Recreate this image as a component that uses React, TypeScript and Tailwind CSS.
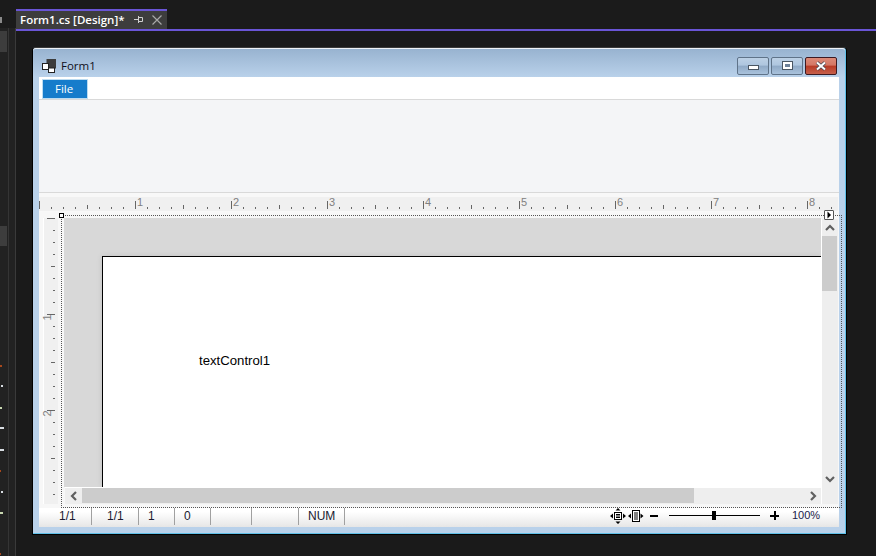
import React from "react";

const ticks = Array.from({ length: 67 }, (_, i) => i);

function HRuler() {
  return (
    <svg width="799" height="14" className="block">
      <g shapeRendering="crispEdges">
        {ticks.map((i) => {
          const x = i * 12 + 0.5;
          const top = i % 8 === 0 ? 4 : i % 4 === 0 ? 8 : 10;
          return <line key={i} x1={x} x2={x} y1={top} y2={12} stroke="#666" strokeWidth="1" />;
        })}
      </g>
      {[1, 2, 3, 4, 5, 6, 7, 8].map((n) => (
        <text key={n} x={n * 96 + 2} y="8.5" fontSize="11" fontFamily="'Liberation Sans', sans-serif" fill="#808080">
          {n}
        </text>
      ))}
    </svg>
  );
}

function VRuler() {
  const vt = Array.from({ length: 24 }, (_, i) => i);
  return (
    <svg width="13" height="286" className="block" shapeRendering="crispEdges">
      {vt.map((i) => {
        const y = i * 12 + 0.5;
        const len = i % 8 === 0 ? 8 : i % 4 === 0 ? 4 : 2;
        return <line key={i} x1={11 - len} x2={11} y1={y} y2={y} stroke="#666" strokeWidth="1" />;
      })}
    </svg>
  );
}

function Chevron({ d }: { d: string }) {
  return (
    <svg width="10" height="10" viewBox="0 0 10 10" className="block">
      <path d={d} fill="none" stroke="#606060" strokeWidth="2.2" />
    </svg>
  );
}

function WinButton({ kind }: { kind: "min" | "max" | "close" }) {
  const isClose = kind === "close";
  return (
    <div
      className={
        isClose
          ? "relative w-[32px] h-[18px] rounded-[2px] border border-[#3c1a22] flex items-center justify-center bg-[linear-gradient(#dc8a78_0%,#d47765_45%,#b83a25_50%,#c6604c_100%)]"
          : "relative w-[32px] h-[18px] rounded-[2px] border border-[#5f7389] flex items-center justify-center bg-[linear-gradient(#bcd0e5_0%,#aec6df_45%,#8fa9c6_50%,#a9c2dc_100%)]"
      }
    >
      {kind === "min" && <div className="w-[11px] h-[5px] mt-[3px] bg-white border border-[#4a5663]" />}
      {kind === "max" && (
        <div className="w-[11px] h-[9px] bg-white border border-[#4a5663] flex items-center justify-center">
          <div className="w-[5px] h-[3px] bg-[#6d8199]" />
        </div>
      )}
      {kind === "close" && (
        <svg width="12" height="10" viewBox="0 0 12 10">
          <path d="M2 1.5 L10 8.5 M10 1.5 L2 8.5" stroke="#4a4a55" strokeWidth="3.6" />
          <path d="M2 1.5 L10 8.5 M10 1.5 L2 8.5" stroke="#ffffff" strokeWidth="2" />
        </svg>
      )}
    </div>
  );
}

const cells: [number, string, string][] = [
  [53, "pl-[20px]", "1/1"],
  [47, "pl-[15px]", "1/1"],
  [36, "pl-[9px]", "1"],
  [36, "pl-[9px]", "0"],
  [41, "", ""],
  [47, "", ""],
  [46, "pl-[9px]", "NUM"],
];

const dots: [number, number, number, string][] = [
  [365, 0, 2, "bg-[#a8481c]"],
  [385, 1, 2, "bg-[#d8dde2]"],
  [407, 0, 2, "bg-[#c8d8b0]"],
  [427, 0, 4, "bg-[#d8dde2]"],
  [449, 0, 4, "bg-[#d8dde2]"],
  [470, 0, 1, "bg-[#a8481c]"],
  [491, 1, 2, "bg-[#d8dde2]"],
  [512, 0, 3, "bg-[#c8d8b0]"],
  [553, 0, 1, "bg-[#a8481c]"],
];

export default function App() {
  return (
    <div className="relative w-[876px] h-[556px] overflow-hidden bg-[#1b1b1b] flex font-['Open_Sans',sans-serif]">
      {/* left strip */}
      <div className="w-[16px] h-full flex-none flex flex-col">
        <div className="h-[28px] flex-none relative">
          <div className="absolute left-0 top-[17px] w-[2px] h-[6px] bg-[#8a8a8a]" />
        </div>
        <div className="relative flex-1 bg-[#222222] border-r border-[#3a3a3a]">
          <div className="absolute left-[8px] top-0 bottom-0 w-px bg-[#353535]" />
          <div className="absolute left-0 top-[3px] w-[7px] h-[21px] bg-[#3d3d3d]" />
          <div className="absolute left-0 top-[198px] w-[7px] h-[20px] bg-[#3d3d3d]" />
          {dots.map(([y, x, w, c]) => (
            <div key={y} style={{ top: y - 28, left: x, width: w }} className={`absolute h-[2px] ${c}`} />
          ))}
        </div>
      </div>

      <div className="flex-1 flex flex-col min-w-0">
        {/* tab bar */}
        <div className="h-[31px] flex-none pt-[9px] bg-[#1b1b1b] border-b-2 border-[#6a55d6]">
          <div className="w-[151px] h-[20px] bg-[#3d3d3d] border-t-2 border-[#6a55d6] flex items-center pl-[4px] text-white">
            <span className="w-[104px] flex-none text-[11.5px] font-semibold leading-none whitespace-nowrap">Form1.cs [Design]*</span>
            <svg width="10" height="10" viewBox="0 0 10 10" className="ml-[10px] flex-none">
              <path d="M0 4.5 H4 M4.5 1 V8 M4.5 2.5 H8.5 V6.5 H4.5" fill="none" stroke="#d0d0d0" strokeWidth="1" />
            </svg>
            <svg width="10" height="10" viewBox="0 0 10 10" className="ml-[8px] flex-none">
              <path d="M0.5 0.5 L9.5 9.5 M9.5 0.5 L0.5 9.5" stroke="#a8a8a8" strokeWidth="1.2" />
            </svg>
          </div>
        </div>

        {/* design surface */}
        <div className="flex-1 bg-[#1a1a1a] pt-[16px] pl-[16px]">
          {/* window */}
          <div className="w-[815px] h-[488px] rounded-t-[4px] border border-black border-t-[#3a3a3a]">
            <div className="h-full bg-[#b9d1ea] flex flex-col border-r border-b border-[#5fc0e8] rounded-t-[3px]">
              <div className="h-[29px] flex-none rounded-t-[3px] border-t border-[#eef2f7] bg-[linear-gradient(#98b3d0,#b9d1ea)] pt-[5px] flex items-center pl-[9px] pr-[8px]">
                <svg width="14" height="14" viewBox="0 0 14 14" className="flex-none">
                  <rect x="5" y="0.5" width="8.5" height="8.5" fill="#3c3c3c" stroke="#3c3c3c" />
                  <rect x="0.5" y="4.5" width="6" height="6" fill="#ffffff" stroke="#222" />
                  <rect x="6.5" y="9" width="6" height="4.5" fill="#ffffff" stroke="#222" />
                </svg>
                <span className="ml-[5px] text-[11.5px] leading-none text-[#101020]">Form1</span>
                <div className="ml-auto flex gap-[2px]">
                  <WinButton kind="min" />
                  <WinButton kind="max" />
                  <WinButton kind="close" />
                </div>
              </div>

              <div className="flex-1 mx-[6px] mb-[6px] flex flex-col bg-[#f0f0f0] min-h-0">
                {/* menu */}
                <div className="h-[23px] flex-none bg-white border-b border-[#d9d9d9] pl-[3px] pt-[2px]">
                  <div className="w-[46px] h-[20px] bg-[#167ccb] border border-[#bcdcf2] text-white text-[11.5px] leading-[18px] pl-[12px]">File</div>
                </div>
                {/* toolbar */}
                <div className="h-[93px] flex-none bg-[#f4f5f7] border-b border-[#d9d9d9]" />
                {/* h ruler */}
                <div className="h-[19px] flex-none bg-[#f8f8f8] pt-[4px]">
                  <div className="h-[14px] mr-[1px] bg-[#f0f0f0]">
                    <HRuler />
                  </div>
                </div>

                {/* designer body */}
                <div className="relative flex-1 min-h-0 bg-white flex flex-col">
                  {/* selection frame */}
                  <div className="absolute left-[22px] top-[3px] w-[781px] h-[293px] border border-dotted border-[#555555] z-10 pointer-events-none" />
                  <div className="absolute left-[20px] top-[1px] w-[3px] h-[3px] bg-white border border-black z-20 box-content" />
                  <div className="absolute left-[785px] top-[-2px] w-[8px] h-[8px] bg-white border border-[#555555] rounded-[1px] z-20 box-content flex items-center justify-center">
                    <svg width="6" height="8" viewBox="0 0 6 8" className="block">
                      <path d="M1.5 0.5 L5 4 L1.5 7.5 Z" fill="#000" />
                    </svg>
                  </div>

                  <div className="h-[296px] flex-none flex bg-[#f7f7f7] pt-[6px] pb-[4px]">
                    {/* v ruler */}
                    <div className="w-[15px] ml-[4px] flex-none bg-[#f0f0f0] border-l border-white">
                      <div className="relative h-[286px]">
                        <VRuler />
                        <span className="absolute left-[0px] top-[94px] text-[11px] leading-none text-[#808080] rotate-[-90deg] font-['Liberation_Sans',sans-serif]">1</span>
                        <span className="absolute left-[0px] top-[190px] text-[11px] leading-none text-[#808080] rotate-[-90deg] font-['Liberation_Sans',sans-serif]">2</span>
                      </div>
                    </div>

                    <div className="flex-1 ml-[6px] mr-[1px] flex min-w-0">
                      <div className="flex-1 flex flex-col min-w-0">
                        {/* page canvas */}
                        <div className="flex-1 min-h-0 bg-[#d8d8d8] pl-[38px] pt-[38px]">
                          <div className="h-full bg-white border-t border-l border-black pl-[96px] pt-[90px] shadow-[0_0_6px_rgba(0,0,0,0.1)]">
                            <span className="text-[13.2px] leading-none text-black font-['Liberation_Sans',sans-serif]">textControl1</span>
                          </div>
                        </div>
                        {/* h scrollbar */}
                        <div className="h-[17px] flex-none bg-[#eeeeee] flex border-t border-white ml-[1px]">
                          <div className="w-[17px] flex items-center justify-center">
                            <Chevron d="M7 1 L3 5 L7 9" />
                          </div>
                          <div className="w-[612px] h-[15px] bg-[#cccccc]" />
                          <div className="flex-1 flex items-center justify-end pr-[3px]">
                            <Chevron d="M3 1 L7 5 L3 9" />
                          </div>
                        </div>
                      </div>
                      {/* v scrollbar */}
                      <div className="w-[17px] flex-none mt-[1px] bg-[#eeeeee] flex flex-col border-l border-white">
                        <div className="h-[17px] flex items-center justify-center pr-[1px]">
                          <Chevron d="M1 7 L5 3 L9 7" />
                        </div>
                        <div className="h-[55px] w-[15px] bg-[#cccccc]" />
                        <div className="flex-1 flex items-end justify-center pr-[1px] pb-[20px]">
                          <Chevron d="M1 3 L5 7 L9 3" />
                        </div>
                      </div>
                    </div>
                  </div>

                  {/* status bar */}
                  <div className="flex-1 bg-[linear-gradient(#ffffff_20%,#e6e6e6)] flex items-start font-['Liberation_Sans',sans-serif] text-[12px] leading-none text-[#1a1a30]">
                    {cells.map(([w, pad, t], i) => (
                      <div key={i} style={{ width: w }} className={`h-[17px] pb-[1px] flex-none border-r border-[#a0a0a0] flex items-center ${pad}`}>
                        {t}
                      </div>
                    ))}
                    <div className="h-[15px] flex items-center">
                      <svg width="16" height="16" viewBox="0 0 16 16" className="ml-[265px] flex-none">
                        <rect x="4.5" y="4.5" width="7" height="7" fill="#fff" stroke="#000" />
                        <path d="M6 6.5 H10 M6 8 H10 M6 9.5 H10" stroke="#000" />
                        <path d="M8 0 L10.5 2.5 H5.5 Z M8 16 L5.5 13.5 H10.5 Z M0 8 L3 5.5 V10.5 Z M16 8 L13 5.5 V10.5 Z" fill="#000" />
                      </svg>
                      <svg width="16" height="16" viewBox="0 0 16 16" className="ml-[2px] flex-none">
                        <rect x="4.5" y="2.5" width="7" height="11" fill="#fff" stroke="#000" />
                        <path d="M6 5 H10 M6 7 H10 M6 9 H10 M6 11 H10" stroke="#000" />
                        <path d="M0 8 L3 5.5 V10.5 Z M15.5 8 L12.5 5.5 V10.5 Z" fill="#000" />
                      </svg>
                      <div className="w-[8px] h-[2px] ml-[6px] flex-none bg-black" />
                      <div className="relative w-[91px] h-px ml-[11px] flex-none bg-black">
                        <div className="absolute left-[43px] top-[-4px] w-[4px] h-[9px] bg-black" />
                      </div>
                      <svg width="9" height="9" viewBox="0 0 9 9" className="ml-[10px] flex-none" shapeRendering="crispEdges">
                        <path d="M0 3.5 H9 V5.5 H0 Z M3.5 0 H5.5 V9 H3.5 Z" fill="#000" />
                      </svg>
                      <span className="ml-[13px] text-[11px] text-[#20204a]">100%</span>
                    </div>
                  </div>
                </div>
              </div>
            </div>
          </div>
        </div>
      </div>
    </div>
  );
}
